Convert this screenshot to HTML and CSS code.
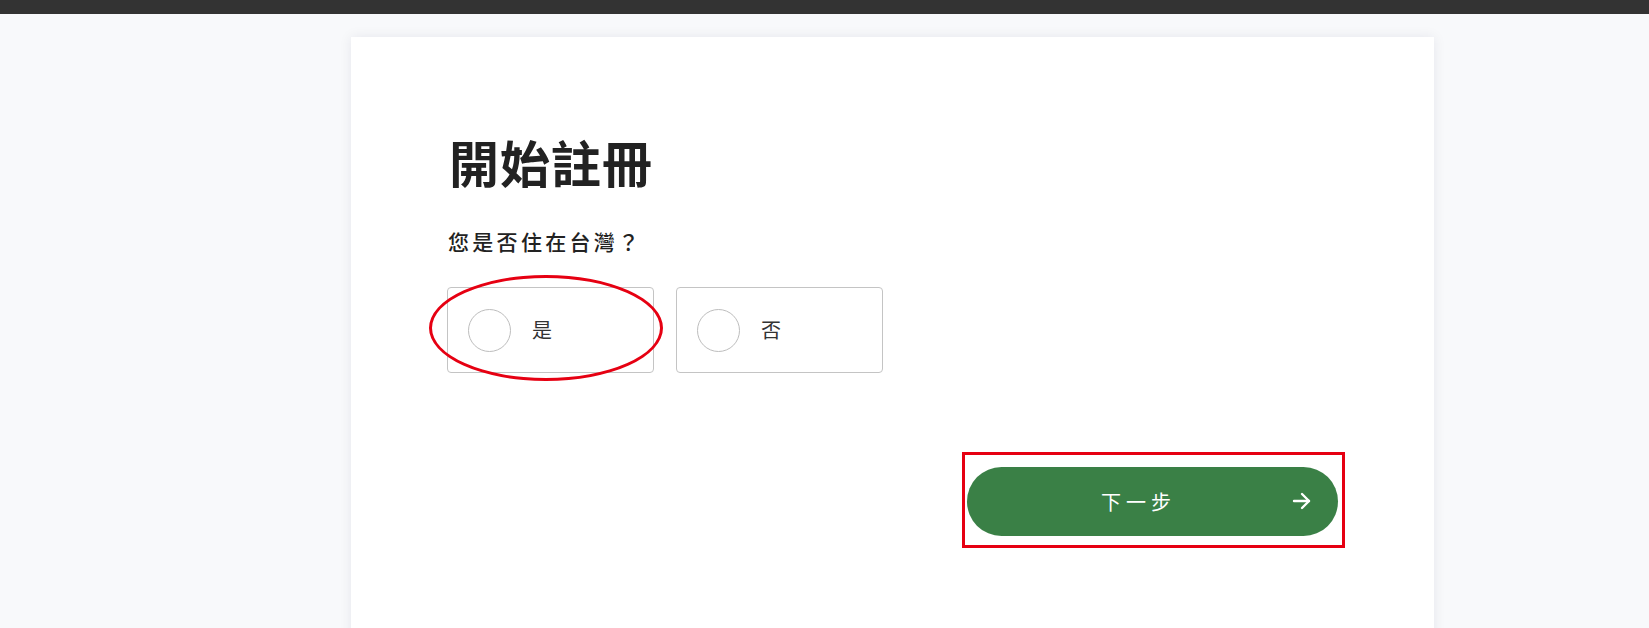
FILE: index.html
```html
<!DOCTYPE html>
<html lang="zh-Hant">
<head>
<meta charset="utf-8">
<title>開始註冊</title>
<link rel="stylesheet" href="styles.css">
</head>
<body>
<div class="topbar"></div>
<main class="page">
  <section class="card">
    <h1 class="title">開始註冊</h1>
    <p class="question">您是否住在台灣？</p>
    <div class="options">
      <label class="option option-yes">
        <span class="radio"></span>
        <span class="option-label">是</span>
        <span class="mark-ellipse"></span>
      </label>
      <label class="option">
        <span class="radio"></span>
        <span class="option-label">否</span>
      </label>
    </div>
    <div class="actions">
      <button class="next" type="button">
        <span class="next-text">下一步</span>
        <svg class="next-arrow" width="20" height="18" viewBox="0 0 20 18" fill="none" stroke="#ffffff" stroke-width="2.4" stroke-linecap="round" stroke-linejoin="round">
          <path d="M2 9h15"/>
          <path d="M10 2l7 7-7 7"/>
        </svg>
        <span class="mark-rect"></span>
      </button>
    </div>
  </section>
</main>
</body>
</html>
```

FILE: styles.css
```css
* {
  box-sizing: border-box;
}

html, body {
  margin: 0;
  padding: 0;
  height: 100%;
  overflow: hidden;
}

body {
  background: #f8f9fb;
  font-family: "Noto Sans CJK TC", "Noto Sans", "Liberation Sans", sans-serif;
  color: #222222;
}

.topbar {
  height: 14px;
  background: #333333;
}

.page {
  display: flex;
  padding: 23px 215px 0 351px;
}

.card {
  width: 1083px;
  min-height: 700px;
  background: #ffffff;
  box-shadow: 0 0 12px rgba(20, 30, 60, 0.08);
  padding: 94px 96px 60px 96px;
}

.title {
  margin: 0 0 0 2px;
  font-size: 50px;
  line-height: 60px;
  font-weight: 700;
  color: #222222;
  letter-spacing: 1px;
}

.question {
  margin: 35px 0 0 1px;
  font-size: 21px;
  line-height: 30px;
  font-weight: 500;
  color: #222222;
  letter-spacing: 3.3px;
}

.options {
  display: flex;
  gap: 22px;
  margin-top: 31px;
}

.option {
  position: relative;
  display: flex;
  align-items: center;
  width: 207px;
  height: 86px;
  border: 1px solid #c4c4c4;
  border-radius: 4px;
  padding-left: 20px;
  gap: 21px;
}

.radio {
  width: 43px;
  height: 43px;
  border: 1.5px solid #bdbdbd;
  border-radius: 50%;
  flex: none;
}

.option-label {
  font-size: 20px;
  line-height: 30px;
  color: #333333;
}

.mark-ellipse {
  position: absolute;
  left: -19px;
  top: -13px;
  width: 234px;
  height: 106px;
  border: 3px solid #e60012;
  border-radius: 50%;
  pointer-events: none;
}

.actions {
  display: flex;
  justify-content: flex-end;
  margin-top: 94px;
}

.next {
  position: relative;
  display: flex;
  align-items: center;
  justify-content: center;
  width: 371px;
  height: 69px;
  border: none;
  border-radius: 35px;
  background: #3a8046;
  color: #ffffff;
  padding: 0 28px 0 0;
  font-family: inherit;
  cursor: pointer;
}

.next-text {
  font-size: 20px;
  letter-spacing: 5px;
  font-weight: 400;
}

.next-arrow {
  position: absolute;
  right: 26px;
  top: 25px;
}

.mark-rect {
  position: absolute;
  left: -5px;
  top: -15px;
  width: 383px;
  height: 96px;
  border: 3px solid #e60012;
  pointer-events: none;
}
```
